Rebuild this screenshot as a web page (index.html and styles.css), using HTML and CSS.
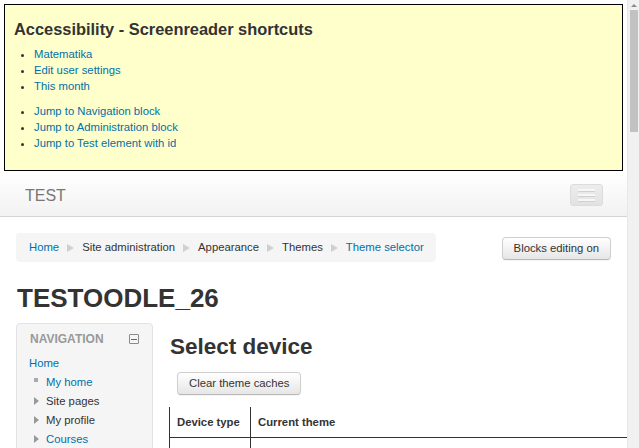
FILE: index.html
```html
<!DOCTYPE html>
<html lang="en">
<head>
<meta charset="utf-8">
<title>Theme selector</title>
<link rel="stylesheet" href="styles.css">
</head>
<body>
<div class="frame">
  <div class="page">
    <div class="skip">
      <h2 class="skip-title">Accessibility - Screenreader shortcuts</h2>
      <ul class="skip-list">
        <li><a href="#">Matematika</a></li>
        <li><a href="#">Edit user settings</a></li>
        <li><a href="#">This month</a></li>
      </ul>
      <ul class="skip-list skip-list-2">
        <li><a href="#">Jump to Navigation block</a></li>
        <li><a href="#">Jump to Administration block</a></li>
        <li><a href="#">Jump to Test element with id</a></li>
      </ul>
    </div>

    <header class="navbar">
      <span class="brand">TEST</span>
      <span class="btn-navbar"><span class="bar"></span><span class="bar"></span><span class="bar"></span></span>
    </header>

    <div class="container">
      <div class="page-header">
        <nav class="crumbs">
          <a href="#">Home</a><span class="sep"></span>
          <span>Site administration</span><span class="sep"></span>
          <span>Appearance</span><span class="sep"></span>
          <span>Themes</span><span class="sep"></span>
          <a href="#">Theme selector</a>
        </nav>
        <span class="btn btn-edit">Blocks editing on</span>
      </div>

      <h1 class="site-title">TESTOODLE_26</h1>

      <div class="columns">
        <aside class="block">
          <div class="block-head">
            <span class="block-title">NAVIGATION</span>
            <span class="collapse"><span class="minus"></span></span>
          </div>
          <ul class="nav-tree">
            <li class="nav-root"><a href="#">Home</a></li>
            <li class="nav-item"><span class="ico"><span class="sq"></span></span><a href="#">My home</a></li>
            <li class="nav-item"><span class="ico"><span class="tri"></span></span><span>Site pages</span></li>
            <li class="nav-item"><span class="ico"><span class="tri"></span></span><span>My profile</span></li>
            <li class="nav-item"><span class="ico"><span class="tri"></span></span><a href="#">Courses</a></li>
          </ul>
        </aside>

        <main class="content">
          <h2 class="content-title">Select device</h2>
          <span class="btn btn-clear">Clear theme caches</span>
          <table class="devices">
            <thead>
              <tr><th class="col-type">Device type</th><th>Current theme</th></tr>
            </thead>
            <tbody>
              <tr><td class="col-type"></td><td></td></tr>
            </tbody>
          </table>
        </main>
      </div>
    </div>
  </div>
  <div class="scrollbar">
    <span class="arrow-up"></span>
    <span class="thumb"></span>
  </div>
</div>
</body>
</html>
```

FILE: styles.css
```css
html, body {
  margin: 0;
  height: 448px;
  overflow: hidden;
}
body {
  font-family: "Liberation Sans", Arial, Helvetica, sans-serif;
  font-size: 11.3px;
  color: #333;
  background: #fff;
}
a {
  color: #0070a8;
  text-decoration: none;
}
.frame {
  display: flex;
  height: 448px;
}
.page {
  flex: 1;
  min-width: 0;
  overflow: hidden;
}

/* skip links box */
.skip {
  margin: 4px 4px 0 4px;
  border: 1px solid #000;
  background: #ffffcc;
  padding: 0 9px 19px;
}
.skip-title {
  margin: 14px 0 0;
  font-size: 16.4px;
  line-height: 20px;
  font-weight: bold;
  color: #333;
}
.skip-list {
  margin: 7px 0 0;
  padding: 0 0 0 20px;
  line-height: 16px;
}
.skip-list-2 {
  margin-top: 9px;
}

/* navbar */
.navbar {
  margin-top: 2px;
  height: 43px;
  border-bottom: 1px solid #d4d4d4;
  background: linear-gradient(#ffffff, #f2f2f2);
  display: flex;
  align-items: center;
  justify-content: space-between;
  padding: 0 24px 0 25px;
}
.brand {
  font-size: 16px;
  color: #777;
  padding-top: 3px;
}
.btn-navbar {
  box-sizing: border-box;
  width: 33px;
  height: 22px;
  margin-top: 1px;
  border: 1px solid #dcdcdc;
  border-radius: 3px;
  background: linear-gradient(#ececec, #e2e2e2);
  display: flex;
  flex-direction: column;
  align-items: center;
  justify-content: center;
  gap: 3px;
}
.bar {
  display: block;
  width: 17px;
  height: 2px;
  background: #f7f7f7;
  box-shadow: 0 1px 0 #d0d0d0;
}

/* container */
.container {
  padding: 0 16px;
}
.page-header {
  margin-top: 16px;
  display: flex;
  justify-content: space-between;
  align-items: flex-start;
}
.crumbs {
  background: #f5f5f5;
  border-radius: 4px;
  padding: 8px 12px 8px 13px;
  line-height: 13px;
  display: flex;
  align-items: center;
  color: #333;
}
.sep {
  width: 0;
  height: 0;
  border-top: 4px solid transparent;
  border-bottom: 4px solid transparent;
  border-left: 7px solid #d0d0d0;
  margin: 0 8px;
}
.btn {
  display: inline-block;
  box-sizing: border-box;
  height: 23px;
  line-height: 21px;
  padding: 0 10px;
  border: 1px solid #cfcfcf;
  border-bottom-color: #b8b8b8;
  border-radius: 4px;
  background: linear-gradient(#ffffff, #e6e6e6);
  color: #333;
  white-space: nowrap;
  box-shadow: 0 1px 1px rgba(0,0,0,0.05);
}
.btn-edit {
  margin-top: 4px;
  padding: 0 11px;
}
.site-title {
  margin: 21px 0 10px 1px;
  font-size: 26px;
  line-height: 30px;
  font-weight: bold;
  color: #333;
}

.columns {
  display: flex;
  gap: 16px;
  align-items: flex-start;
}
.block {
  box-sizing: border-box;
  width: 137px;
  flex: none;
  height: 200px;
  border: 1px solid #e3e3e3;
  border-radius: 4px;
  background: #f5f5f5;
  padding: 0 12px;
}
.block-head {
  display: flex;
  justify-content: space-between;
  align-items: center;
  padding: 8px 0 0 1px;
  line-height: 14px;
}
.block-title {
  font-weight: bold;
  font-size: 12px;
  color: #999;
}
.collapse {
  box-sizing: border-box;
  width: 10px;
  height: 10px;
  border: 1px solid #8a8a8a;
  border-radius: 1px;
  display: flex;
  align-items: center;
  justify-content: center;
  margin-right: 1px;
}
.minus {
  width: 6px;
  height: 1px;
  background: #666;
}
.nav-tree {
  list-style: none;
  margin: 8px 0 0;
  padding: 0;
  line-height: 19px;
}
.nav-item {
  display: flex;
  align-items: center;
  margin-left: 5px;
}
.ico {
  width: 12px;
  flex: none;
  display: flex;
  align-items: center;
}
.sq {
  width: 4px;
  height: 4px;
  background: #aaa;
  margin-top: -5px;
}
.tri {
  width: 0;
  height: 0;
  border-top: 4px solid transparent;
  border-bottom: 4px solid transparent;
  border-left: 5px solid #999;
  margin-top: -2px;
}

.content {
  flex: 1;
  min-width: 0;
}
.content-title {
  margin: 11px 0 0 1px;
  font-size: 22.5px;
  line-height: 26px;
  font-weight: bold;
  color: #333;
}
.btn-clear {
  margin: 12px 0 0 8px;
  padding: 0 11px;
}
.devices {
  margin-top: 12px;
  width: calc(100% + 16px);
  border-collapse: collapse;
  border-left: 1px solid #333;
}
.devices th {
  text-align: left;
  font-weight: bold;
  padding: 8px 7px;
  line-height: 14px;
  border-bottom: 1px solid #333;
}
.devices td {
  height: 30px;
  padding: 0 7px;
}
.devices .col-type {
  width: 66px;
  border-right: 1px solid #333;
}

/* scrollbar */
.scrollbar {
  width: 13px;
  flex: none;
  box-sizing: border-box;
  background: #f1f1f1;
  border-left: 1px solid #e8e8e8;
  border-right: 1px solid #d3dacd;
  display: flex;
  flex-direction: column;
  align-items: center;
}
.arrow-up {
  margin-top: 4px;
  width: 0;
  height: 0;
  border-left: 3px solid transparent;
  border-right: 3px solid transparent;
  border-bottom: 3px solid #8c8c8c;
}
.thumb {
  margin-top: 3px;
  width: 8px;
  height: 122px;
  background: #c2c2c2;
}
```
